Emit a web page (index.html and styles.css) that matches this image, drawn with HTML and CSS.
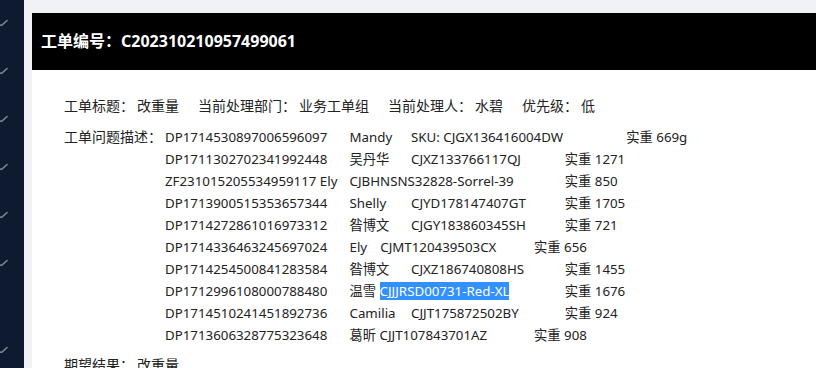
FILE: index.html
```html
<!DOCTYPE html>
<html lang="zh-CN">
<head>
    <meta charset="UTF-8">
    <title>工单详情</title>
    <link rel="stylesheet" href="styles.css">
</head>
<body>
    <div class="sidebar">
        <div class="nav-item"><svg class="check" viewBox="0 0 8 7"><path d="M0 6 L1.5 6.5 L7 1.5"/></svg></div>
        <div class="nav-item"><svg class="check" viewBox="0 0 8 7"><path d="M0 6 L1.5 6.5 L7 1.5"/></svg></div>
        <div class="nav-item"><svg class="check" viewBox="0 0 8 7"><path d="M0 6 L1.5 6.5 L7 1.5"/></svg></div>
        <div class="nav-item"><svg class="check" viewBox="0 0 8 7"><path d="M0 6 L1.5 6.5 L7 1.5"/></svg></div>
        <div class="nav-item"><svg class="check" viewBox="0 0 8 7"><path d="M0 6 L1.5 6.5 L7 1.5"/></svg></div>
        <div class="nav-item"><svg class="check" viewBox="0 0 8 7"><path d="M0 6 L1.5 6.5 L7 1.5"/></svg></div>
        <div class="nav-item last"><svg class="check" viewBox="0 0 8 7"><path d="M0 6 L1.5 6.5 L7 1.5"/></svg></div>
    </div>

    <div class="main">
        <h2 class="ticket-header">工单编号：C202310210957499061</h2>
        <div class="ticket-body">
            <div class="info-row">
                <span class="field"><span class="label">工单标题：</span><span class="value">改重量</span></span>
                <span class="field"><span class="label">当前处理部门：</span><span class="value">业务工单组</span></span>
                <span class="field"><span class="label">当前处理人：</span><span class="value">水碧</span></span>
                <span class="field"><span class="label">优先级：</span><span class="value">低</span></span>
            </div>
            <div class="desc-row">
                <span class="label">工单问题描述：</span>
<div class="desc">DP1714530897006596097	Mandy	SKU: CJGX136416004DW		实重 669g
DP1711302702341992448	吴丹华	CJXZ133766117QJ		实重 1271
ZF231015205534959117 Ely	CJBHNSNS32828-Sorrel-39		实重 850
DP1713900515353657344	Shelly	CJYD178147407GT		实重 1705
DP1714272861016973312	昝博文	CJGY183860345SH		实重 721
DP1714336463245697024	Ely	CJMT120439503CX		实重 656
DP1714254500841283584	昝博文	CJXZ186740808HS		实重 1455
DP1712996108000788480	温雪 <span class="selected">CJJJRSD00731-Red-XL</span>		实重 1676
DP1714510241451892736	Camilia	CJJT175872502BY		实重 924
DP1713606328775323648	葛昕 CJJT107843701AZ		实重 908</div>
            </div>
            <div class="info-row">
                <span class="field"><span class="label">期望结果：</span><span class="value">改重量</span></span>
            </div>
        </div>
    </div>
</body>
</html>
```

FILE: styles.css
```css
body {
    margin: 0;
    height: 368px;
    overflow: hidden;
    display: flex;
    background-color: #f0f2f5;
    font-family: "Noto Sans", "Noto Sans CJK SC", sans-serif;
    font-size: 14px;
    color: #222;
}

.sidebar {
    width: 24px;
    flex-shrink: 0;
    background-color: #0e1a30;
    padding-top: 19px;
    overflow: hidden;
}

.nav-item {
    height: 48px;
}

    .nav-item.last {
        margin-top: 39px;
    }

.check {
    display: block;
    width: 8px;
    height: 7px;
    fill: none;
    stroke: #7d8696;
    stroke-width: 1.6;
    stroke-linecap: round;
    stroke-linejoin: round;
}

.main {
    flex: 1;
    padding: 13px 0 0 8px;
}

.ticket-header {
    margin: 0;
    height: 57px;
    line-height: 57px;
    padding-left: 9px;
    background-color: #000;
    color: #fff;
    font-size: 16px;
    font-weight: bold;
}

.ticket-body {
    background-color: #fff;
    padding: 25px 0 0 32px;
    height: 400px;
}

.info-row {
    display: flex;
    gap: 19px;
    line-height: 22px;
    margin-bottom: 9px;
}

.value {
    margin-left: 3px;
}

.desc-row {
    display: flex;
    line-height: 22px;
    margin-bottom: 8px;
}

.desc {
    margin-left: 3px;
    white-space: pre;
    tab-size: 30.75px;
    font-size: 13.3px;
}

.selected {
    background-color: #3390ff;
    color: #fff;
}
```
